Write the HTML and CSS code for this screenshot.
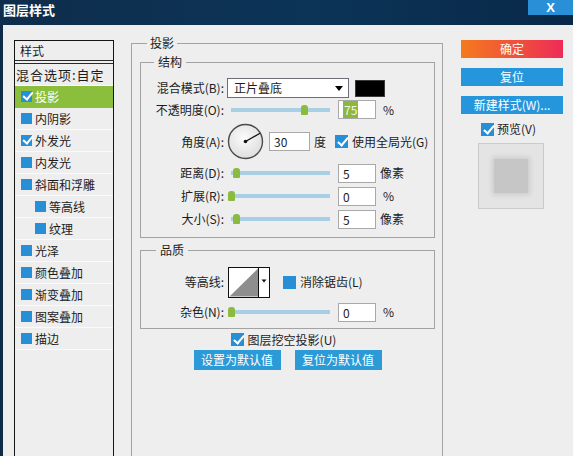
FILE: index.html
```html
<!DOCTYPE html>
<html lang="zh-CN">
<head>
<meta charset="utf-8">
<title>图层样式</title>
<link rel="stylesheet" href="styles.css">
</head>
<body>
<div class="window">
  <div class="titlebar">
    <span class="title">图层样式</span>
    <span class="close">X</span>
  </div>
  <div class="main">
    <div class="stylelist">
      <div class="list-head">样式</div>
      <div class="row blend">混合选项:自定</div>
      <div class="row selected"><span class="cb checked"></span>投影</div>
      <div class="row"><span class="cb"></span>内阴影</div>
      <div class="row"><span class="cb checked"></span>外发光</div>
      <div class="row"><span class="cb"></span>内发光</div>
      <div class="row"><span class="cb"></span>斜面和浮雕</div>
      <div class="row sub"><span class="cb"></span>等高线</div>
      <div class="row sub"><span class="cb"></span>纹理</div>
      <div class="row"><span class="cb"></span>光泽</div>
      <div class="row"><span class="cb"></span>颜色叠加</div>
      <div class="row"><span class="cb"></span>渐变叠加</div>
      <div class="row"><span class="cb"></span>图案叠加</div>
      <div class="row"><span class="cb"></span>描边</div>
    </div>

    <div class="center">
      <fieldset class="outer">
        <legend class="legend-outer">投影</legend>

        <fieldset class="group struct">
          <legend class="legend-struct">结构</legend>
          <div class="frow r-blend">
            <span class="lbl">混合模式(B):</span>
            <div class="select"><span>正片叠底</span><span class="arrow"></span></div>
            <span class="swatch"></span>
          </div>
          <div class="frow r-opacity">
            <span class="lbl">不透明度(O):</span>
            <div class="slider"><span class="thumb" style="left:70px"></span></div>
            <div class="num"><span class="sel">75</span></div>
            <span class="unit pct">%</span>
          </div>
          <div class="frow r-angle">
            <span class="lbl">角度(A):</span>
            <svg class="dial" width="37" height="37" viewBox="0 0 37 37">
              <defs>
                <radialGradient id="dg" cx="45%" cy="40%" r="65%">
                  <stop offset="0" stop-color="#fbfbfb"/>
                  <stop offset="1" stop-color="#dcdcdc"/>
                </radialGradient>
              </defs>
              <circle cx="18.5" cy="18.5" r="17" fill="url(#dg)" stroke="#4a4a4a" stroke-width="1.4"/>
              <line x1="18.5" y1="18.5" x2="33" y2="10.2" stroke="#111" stroke-width="1.3"/>
              <circle cx="18.5" cy="18.5" r="1.8" fill="#111"/>
            </svg>
            <div class="num angle">30</div>
            <span class="unit">度</span>
            <span class="cb lg checked global"></span>
            <span class="cb-text">使用全局光(G)</span>
          </div>
          <div class="frow r-dist">
            <span class="lbl">距离(D):</span>
            <div class="slider"><span class="thumb" style="left:2px"></span></div>
            <div class="num">5</div>
            <span class="unit">像素</span>
          </div>
          <div class="frow r-spread">
            <span class="lbl">扩展(R):</span>
            <div class="slider"><span class="thumb" style="left:-3px"></span></div>
            <div class="num">0</div>
            <span class="unit pct">%</span>
          </div>
          <div class="frow r-size">
            <span class="lbl">大小(S):</span>
            <div class="slider"><span class="thumb" style="left:2px"></span></div>
            <div class="num">5</div>
            <span class="unit">像素</span>
          </div>
        </fieldset>

        <fieldset class="group quality">
          <legend class="legend-quality">品质</legend>
          <div class="frow r-contour">
            <span class="lbl">等高线:</span>
            <svg class="contour" width="42" height="31" viewBox="0 0 42 31">
              <rect x="0.5" y="0.5" width="41" height="30" fill="#fff" stroke="#111"/>
              <polygon points="1.5,29.5 30,1.5 30,29.5" fill="#8e8e8e"/>
              <line x1="30.5" y1="0.5" x2="30.5" y2="30.5" stroke="#111"/>
              <polygon points="33.5,12.5 38.5,12.5 36,15.5" fill="#111"/>
            </svg>
            <span class="cb lg aa"></span>
            <span class="cb-text">消除锯齿(L)</span>
          </div>
          <div class="frow r-noise">
            <span class="lbl">杂色(N):</span>
            <div class="slider"><span class="thumb" style="left:-3px"></span></div>
            <div class="num">0</div>
            <span class="unit pct">%</span>
          </div>
        </fieldset>

        <div class="knock"><span class="cb lg checked"></span><span class="cb-text">图层挖空投影(U)</span></div>
        <div class="defaults">
          <span class="dbtn">设置为默认值</span>
          <span class="dbtn">复位为默认值</span>
        </div>
      </fieldset>
    </div>

    <div class="side">
      <div class="btn ok">确定</div>
      <div class="btn blue">复位</div>
      <div class="btn blue">新建样式(W)...</div>
      <div class="preview-row"><span class="cb lg checked"></span><span class="cb-text">预览(V)</span></div>
      <div class="preview"><div class="preview-inner"></div></div>
    </div>
  </div>
</div>
</body>
</html>
```

FILE: styles.css
```css
* { box-sizing: border-box; }
html, body { margin: 0; padding: 0; }
body {
  width: 573px;
  height: 456px;
  overflow: hidden;
  font-family: "Noto Sans CJK SC", "Liberation Sans", sans-serif;
  font-size: 12px;
  line-height: 14px;
  color: #1c1c1c;
  background: #eeeeee;
}
.window { display: flex; flex-direction: column; height: 456px; }

/* title bar */
.titlebar {
  height: 25px;
  flex: none;
  display: flex;
  justify-content: space-between;
  align-items: flex-start;
  background: linear-gradient(90deg, #0f2d4c 0%, #0b3457 55%, #092848 100%);
}
.title {
  color: #fff;
  font-weight: bold;
  font-size: 13px;
  line-height: 14px;
  margin: 3px 0 0 3px;
}
.close {
  width: 45px;
  height: 15px;
  background: #2990d8;
  color: #fff;
  font-family: "Liberation Sans", sans-serif;
  font-weight: bold;
  font-size: 13px;
  line-height: 15px;
  text-align: center;
}

/* body */
.main {
  flex: 1;
  min-height: 0;
  display: flex;
  align-items: stretch;
  padding-top: 11px;
  border-left: 3px solid #0d2b46;
  background: #eeeeee;
}

/* style list */
.stylelist {
  width: 100px;
  flex: none;
  margin: 4px 0 0 11px;
  border: 1px solid #151515;
  border-bottom: none;
  display: flex;
  flex-direction: column;
}
.list-head {
  height: 23px;
  line-height: 19px;
  padding-left: 5px;
  border-bottom: 4px double #2a2a2a;
}
.row {
  height: 22px;
  flex: none;
  display: flex;
  align-items: center;
  padding-left: 6px;
  border-bottom: 1px solid #fafafa;
}
.row .cb { margin-right: 3px; }
.row.blend { padding-left: 1px; font-size: 13px; letter-spacing: 1px; }
.row.sub { padding-left: 20px; }
.row.selected { background: #8cbe3e; color: #fff; border-bottom-color: #8cbe3e; }

/* checkbox */
.cb {
  position: relative;
  display: inline-block;
  flex: none;
  width: 11px;
  height: 11px;
  background: #268fd5;
}
.cb.lg { width: 13px; height: 13px; }
.cb.checked::after {
  content: "";
  position: absolute;
  left: 4px;
  top: -1px;
  width: 4px;
  height: 8px;
  border: solid #fff;
  border-width: 0 2px 2px 0;
  transform: rotate(40deg);
}
.cb.lg.checked::after { left: 5px; top: 0; height: 9px; }
.cb-text { margin-left: 4px; white-space: nowrap; }

/* center */
.center {
  width: 312px;
  flex: none;
  margin-left: 17px;
  display: flex;
  flex-direction: column;
}
fieldset { margin: 0; min-width: 0; border: 1px solid #a3a3a3; }
legend { font-size: 12px; line-height: 14px; }
.outer {
  flex: 1;
  padding: 5px 7px 0 8px;
  border-bottom: none;
}
.legend-outer { padding: 0 3px; margin-left: 7px; }
.group { padding: 9px 0 7px 0; }
.legend-struct { padding: 0 4px; margin-left: 13px; }
.quality { margin-top: 5px; padding: 10px 0 5px 0; }
.legend-quality { padding: 0 4px; margin-left: 15px; }

.frow { display: flex; align-items: center; white-space: nowrap; }
.r-blend { height: 20px; }
.r-opacity { height: 23px; }
.r-angle { height: 41px; }
.r-dist { height: 22px; }
.r-spread { height: 24px; }
.r-size { height: 22px; }
.r-contour { height: 30px; }
.r-noise { height: 22px; margin-top: 4px; }

.lbl { width: 83px; flex: none; text-align: right; }

.select {
  margin-left: 3px;
  width: 122px;
  height: 20px;
  background: #fff;
  border: 1px solid #6c7076;
  display: flex;
  align-items: center;
  justify-content: space-between;
  padding: 0 5px 0 6px;
}
.arrow {
  width: 0;
  height: 0;
  border-left: 4px solid transparent;
  border-right: 4px solid transparent;
  border-top: 5px solid #000;
}
.swatch {
  margin-left: 6px;
  width: 30px;
  height: 17px;
  background: #000;
  border: 1px solid #3a3a3a;
}

.slider {
  position: relative;
  margin-left: 7px;
  width: 99px;
  height: 4px;
  flex: none;
  background: #a8cfe4;
}
.thumb {
  position: absolute;
  top: -3px;
  width: 7px;
  height: 10px;
  border-radius: 3px 3px 1px 1px;
  background: #8bbb3e;
}

.num {
  margin-left: 8px;
  width: 38px;
  height: 19px;
  flex: none;
  background: #fff;
  border: 1px solid #a9a9a9;
  padding-left: 4px;
  line-height: 17px;
}
.num .sel { background: #8db83f; color: #f2f7e6; padding: 0 1px; }
.num.angle { margin-left: 5px; width: 41px; }
.unit { margin-left: 4px; }
.unit.pct { margin-left: 7px; }
.dial { margin-left: 3px; flex: none; }
.global { margin-left: 9px; }

.contour { margin-left: 4px; flex: none; }
.aa { margin-left: 13px; }

.knock {
  height: 19px;
  margin-top: 1px;
  display: flex;
  align-items: center;
  justify-content: center;
  padding-right: 8px;
}
.defaults {
  display: flex;
  justify-content: center;
  gap: 14px;
  margin-top: 1px;
}
.dbtn {
  width: 87px;
  height: 20px;
  line-height: 20px;
  text-align: center;
  color: #fff;
  background: #2b9ad7;
}

/* right side */
.side {
  width: 102px;
  flex: none;
  margin-left: 18px;
  padding-top: 4px;
  display: flex;
  flex-direction: column;
}
.btn {
  height: 18px;
  line-height: 18px;
  text-align: center;
  color: #fff;
}
.btn + .btn { margin-top: 10px; }
.ok { background: linear-gradient(90deg, #f47a1e 0%, #f0503c 55%, #ee2b58 100%); }
.blue { background: #2596dc; }
.preview-row {
  margin-top: 7px;
  height: 16px;
  padding-left: 20px;
  display: flex;
  align-items: center;
}
.preview-row .cb-text { margin-left: 3px; }
.preview {
  margin: 6px 0 0 17px;
  width: 66px;
  height: 66px;
  background: #e4e4e4;
  border: 1px solid #cacaca;
  display: flex;
  align-items: center;
  justify-content: center;
}
.preview-inner {
  width: 34px;
  height: 34px;
  background: #c6c6c6;
  box-shadow: 0 0 5px 2px rgba(0, 0, 0, 0.10);
}
```
